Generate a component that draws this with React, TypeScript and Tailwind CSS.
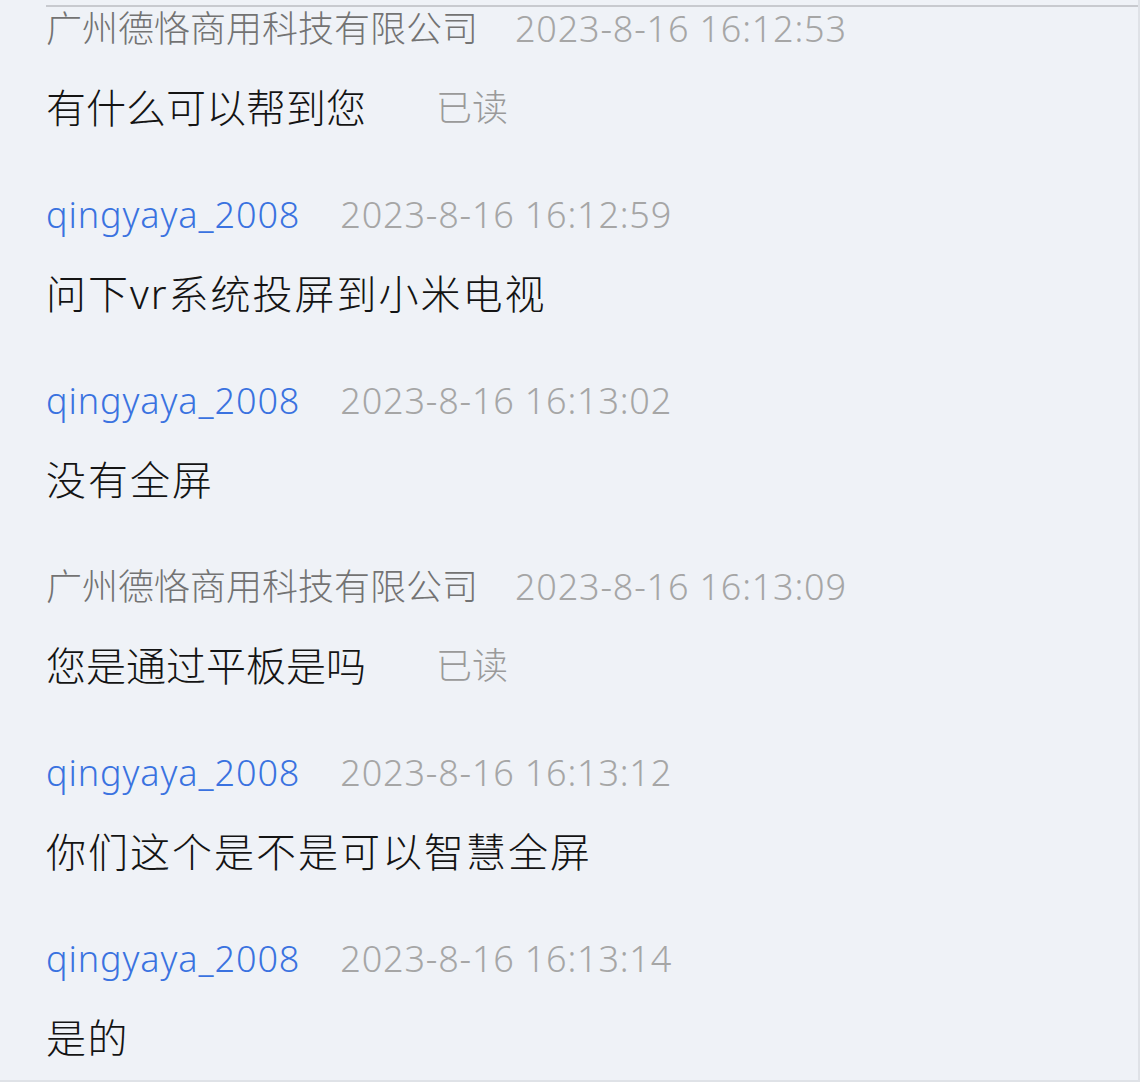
import React from 'react';

type Msg = {
  sender: string;
  time: string;
  text: string;
  mine?: boolean;
  read?: boolean;
  track?: string;
};

const messages: Msg[] = [
  { sender: '广州德恪商用科技有限公司', time: '2023-8-16 16:12:53', text: '有什么可以帮到您', mine: true, read: true },
  { sender: 'qingyaya_2008', time: '2023-8-16 16:12:59', text: '问下vr系统投屏到小米电视', track: 'tracking-[2px]' },
  { sender: 'qingyaya_2008', time: '2023-8-16 16:13:02', text: '没有全屏', track: 'tracking-[2px]' },
  { sender: '广州德恪商用科技有限公司', time: '2023-8-16 16:13:09', text: '您是通过平板是吗', mine: true, read: true },
  { sender: 'qingyaya_2008', time: '2023-8-16 16:13:12', text: '你们这个是不是可以智慧全屏', track: 'tracking-[2px]' },
  { sender: 'qingyaya_2008', time: '2023-8-16 16:13:14', text: '是的', track: 'tracking-[1.5px]' },
];

const font = { fontFamily: '"Noto Sans", "Noto Sans CJK SC", sans-serif' };

export default function App() {
  return (
    <div
      className="w-[1140px] h-[1082px] bg-[#eff2f7] border-r-2 border-b-2 border-[#dfe2e7] overflow-hidden"
      style={font}
    >
      <div className="ml-[46px] mt-[5px] h-[2px] bg-[#c8cacf]" />
      <div className="pl-[46px] pt-[2px]">
        {messages.map((m, i) => (
          <div key={i} className="mb-[62px]">
            <div className="flex items-center h-[40px] leading-[40px] text-[36px] font-light">
              <span className={m.mine ? 'text-[#737373]' : 'text-[#3a72e0] tracking-[0.9px]'}>{m.sender}</span>
              <span className={m.mine ? 'ml-[37px] text-[#a6a6a6] tracking-[0.8px]' : 'ml-[40px] text-[#a6a6a6] tracking-[0.8px]'}>
                {m.time}
              </span>
            </div>
            <div className="mt-[34px] flex items-center h-[50px] leading-[50px]">
              <span className={`text-[40px] font-light text-[#141414] ${m.track ?? ''}`}>{m.text}</span>
              {m.read && <span className="ml-[70px] text-[36px] font-light text-[#9a9a9a]">已读</span>}
            </div>
          </div>
        ))}
      </div>
    </div>
  );
}
